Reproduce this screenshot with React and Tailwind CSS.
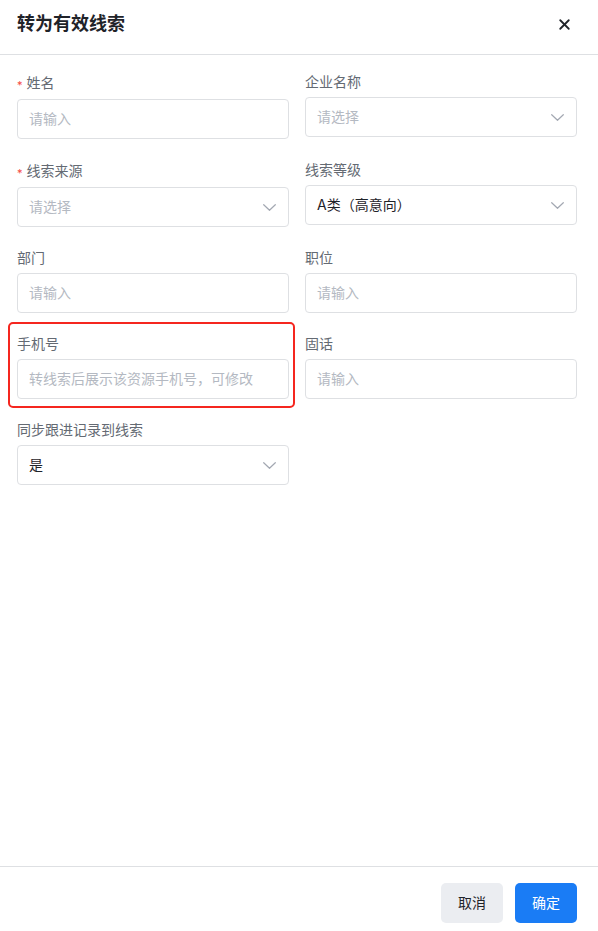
import { X } from 'lucide-react';

const FIELDS = [
  { label: '姓名', required: true, placeholder: '请输入' },
  { label: '企业名称', select: true, placeholder: '请选择' },
  { label: '线索来源', required: true, select: true, placeholder: '请选择' },
  { label: '线索等级', select: true, value: 'A类（高意向）' },
  { label: '部门', placeholder: '请输入' },
  { label: '职位', placeholder: '请输入' },
  { label: '手机号', placeholder: '转线索后展示该资源手机号，可修改', marked: true },
  { label: '固话', placeholder: '请输入' },
  { label: '同步跟进记录到线索', select: true, value: '是' },
];

function Chevron() {
  return (
    <svg width="13" height="7" viewBox="0 0 13 7" fill="none" className="text-[#a3a8b2]">
      <path d="M0.7 0.7l5.8 5.6 5.8-5.6" stroke="currentColor" strokeWidth="1.2" strokeLinecap="round" strokeLinejoin="round" />
    </svg>
  );
}

function Field({ label, required, select, placeholder, value, marked }) {
  return (
    <div className="relative flex flex-col gap-1">
      {marked && (
        <div className="absolute left-[-9px] right-[-6px] top-[-11px] bottom-[-9px] border-[2.5px] border-[#f5261f] rounded-[5px] pointer-events-none" />
      )}
      <div className={`flex items-center text-sm text-[#646a73] ${required ? 'h-[24px]' : 'h-[22px]'}`}>
        {required && <span className="text-[#f54a45] text-[11px] mr-[4px] mt-[5px] leading-none">*</span>}
        {label}
      </div>
      <div className="h-[40px] border border-[#dee0e3] rounded-[4px] pl-[11px] pr-[12px] flex items-center justify-between text-sm">
        <span className={value ? 'text-[#1f2329]' : 'text-[#b4b9c2]'}>{value || placeholder}</span>
        {select && <Chevron />}
      </div>
    </div>
  );
}

export default function App() {
  return (
    <div className="h-screen flex flex-col bg-white" style={{ fontFamily: "Inter, 'Noto Sans CJK SC', sans-serif" }}>
      <div className="h-[55px] shrink-0 border-b border-[#dee0e3] flex items-start justify-between pl-[17px] pr-[22px] pt-[11px]">
        <h1 className="text-[18px] leading-[26px] font-semibold text-[#1f2329]">转为有效线索</h1>
        <button className="mt-[2px] p-[3px] text-[#1f2329]"><X size={17} strokeWidth={2.6} /></button>
      </div>

      <div className="flex-1 pl-[17px] pr-[22px] pt-[16px]">
        <div className="grid grid-cols-[272px_272px] gap-x-[16px] gap-y-[20px] items-start">
          {FIELDS.map((f) => <Field key={f.label} {...f} />)}
        </div>
      </div>

      <div className="shrink-0 border-t border-[#dee0e3] flex justify-end gap-3 pt-[16px] pb-[8px] pr-[21px]">
        <button className="w-[62px] h-[40px] rounded-[5px] bg-[#ebedf1] text-sm text-[#1f2329]">取消</button>
        <button className="w-[62px] h-[40px] rounded-[5px] bg-[#1a7cf5] text-sm text-white">确定</button>
      </div>
    </div>
  );
}
